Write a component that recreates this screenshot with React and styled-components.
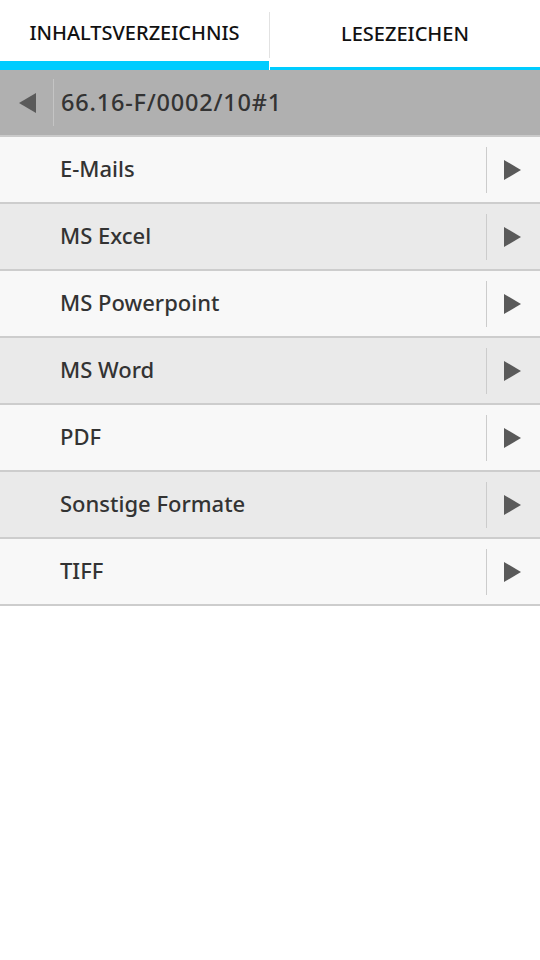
import React from 'react'
import styled, { createGlobalStyle } from 'styled-components'

const GlobalStyle = createGlobalStyle`
  html, body {
    margin: 0;
    padding: 0;
    background: #ffffff;
  }
  body {
    font-family: "Noto Sans", "Open Sans", sans-serif;
  }
`;

const Page = styled.div`
  width: 540px;
  min-height: 960px;
  background: #ffffff;
`;

const TabBar = styled.div`
  display: flex;
  height: 70px;
`;

const Tab = styled.div`
  flex: 0 0 ${({ wide }) => (wide ? '270px' : '269px')};
  display: flex;
  align-items: center;
  justify-content: center;
  box-sizing: border-box;
  padding-top: ${({ active }) => (active ? '4px' : '0')};
  border-bottom: ${({ active }) => (active ? '9px' : '3px')} solid #00ccff;
  font-size: 20px;
  font-weight: 500;
  line-height: 1;
  color: #111111;
  text-transform: uppercase;
`;

const TabDivider = styled.div`
  flex: 0 0 1px;
  align-self: flex-start;
  margin-top: 12px;
  height: 46px;
  background: #e2e2e2;
`;

const Header = styled.div`
  display: flex;
  align-items: center;
  height: 65px;
  background: #b0b0b0;
  border-bottom: 2px solid #cacaca;
`;

const BackButton = styled.div`
  flex: 0 0 53px;
  display: flex;
  align-items: center;
  padding-left: 19px;
  box-sizing: border-box;
`;

const Sep = styled.div`
  flex: 0 0 1px;
  height: ${({ tall }) => tall}px;
  background: ${({ color }) => color};
`;

const Title = styled.div`
  padding-left: 7px;
  font-size: 23.5px;
  font-weight: 500;
  letter-spacing: 0.8px;
  line-height: 1;
  color: #333333;
`;

const List = styled.div`
  display: flex;
  flex-direction: column;
`;

const Row = styled.div`
  display: flex;
  align-items: center;
  height: 65px;
  background: ${({ shade }) => (shade ? '#eaeaea' : '#f8f8f8')};
  border-bottom: 2px solid #cdcdcd;
`;

const Label = styled.div`
  flex: 1;
  padding-left: 60px;
  padding-bottom: 3px;
  font-size: 22px;
  font-weight: 500;
  line-height: 1;
  color: #333333;
`;

const Arrow = styled.div`
  flex: 0 0 53px;
  display: flex;
  align-items: center;
  padding-left: 17px;
  box-sizing: border-box;
`;

const Triangle = ({ dir }) => (
  <svg width="17" height="20" viewBox="0 0 17 20">
    <polygon
      points={dir === 'left' ? '17,0 17,20 0,10' : '0,0 0,20 17,10'}
      fill="#5a5a5a"
    />
  </svg>
);

const items = [
  'E-Mails',
  'MS Excel',
  'MS Powerpoint',
  'MS Word',
  'PDF',
  'Sonstige Formate',
  'TIFF',
];

export default function App() {
  return (
    <Page>
      <GlobalStyle />
      <TabBar>
        <Tab active>Inhaltsverzeichnis</Tab>
        <TabDivider />
        <Tab wide>Lesezeichen</Tab>
      </TabBar>
      <Header>
        <BackButton>
          <Triangle dir="left" />
        </BackButton>
        <Sep tall={47} color="#c4c4c4" />
        <Title>66.16-F/0002/10#1</Title>
      </Header>
      <List>
        {items.map((name, i) => (
          <Row key={name} shade={i % 2 === 1}>
            <Label>{name}</Label>
            <Sep tall={46} color="#cccccc" />
            <Arrow>
              <Triangle dir="right" />
            </Arrow>
          </Row>
        ))}
      </List>
    </Page>
  );
}
